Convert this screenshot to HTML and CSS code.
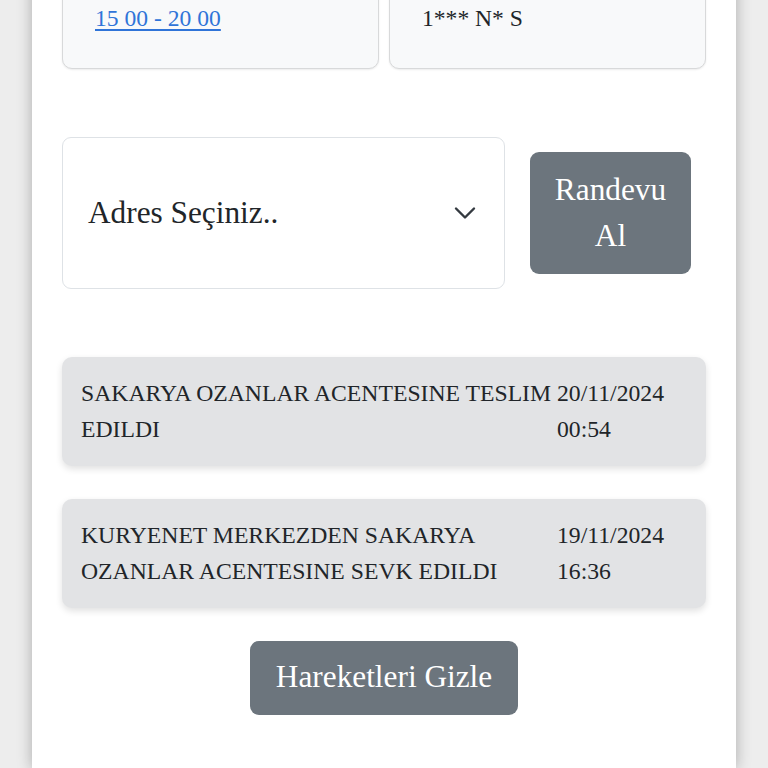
FILE: index.html
```html
<!DOCTYPE html>
<html lang="tr">
<head>
<meta charset="utf-8">
<title>Kargo Takip</title>
<link rel="stylesheet" href="styles.css">
</head>
<body>
<div class="page">
  <div class="info-row">
    <div class="info-card"><a class="time-link" href="#">15 00 - 20 00</a></div>
    <div class="info-card"><span class="info-text">1*** N* S</span></div>
  </div>

  <div class="appt-row">
    <div class="address-select">
      <span class="select-text">Adres Seçiniz..</span>
      <svg class="chevron" width="22" height="14" viewBox="0 0 22 14" aria-hidden="true">
        <polyline points="2,2.5 11,11.5 20,2.5" fill="none" stroke="#343a40" stroke-width="2.4" stroke-linecap="round" stroke-linejoin="round"/>
      </svg>
    </div>
    <button class="btn btn-appt">Randevu Al</button>
  </div>

  <div class="moves">
    <div class="move">
      <div class="move-desc">SAKARYA OZANLAR ACENTESINE TESLIM EDILDI</div>
      <div class="move-date">20/11/2024 00:54</div>
    </div>
    <div class="move">
      <div class="move-desc">KURYENET MERKEZDEN SAKARYA OZANLAR ACENTESINE SEVK EDILDI</div>
      <div class="move-date">19/11/2024 16:36</div>
    </div>
  </div>

  <div class="hide-wrap">
    <button class="btn btn-hide">Hareketleri Gizle</button>
  </div>
</div>
</body>
</html>
```
FILE: styles.css
```css
html, body {
  margin: 0;
  padding: 0;
}
body {
  background: #ededed;
  font-family: "Liberation Serif", "Times New Roman", serif;
  color: #212529;
  overflow: hidden;
  height: 768px;
}
.page {
  width: 644px;
  margin: 0 auto;
  padding: 0 30px 54px;
  background: #ffffff;
  box-shadow: 0 0 14px rgba(0, 0, 0, 0.28);
}
.info-row {
  display: grid;
  grid-template-columns: 1fr 1fr;
  gap: 10px;
  margin-top: -30px;
}
.info-card {
  background: #f8f9fa;
  border: 1px solid #d8d9da;
  border-radius: 10px;
  box-shadow: 0 1px 2px rgba(0, 0, 0, 0.08);
  padding: 34px 32px 37px;
  font-size: 23.6px;
  line-height: 26px;
}
.time-link {
  color: #2f74d8;
  text-decoration: underline;
  text-underline-offset: 3px;
}
.info-text {
  color: #212529;
}
.appt-row {
  display: flex;
  align-items: center;
  margin-top: 68px;
}
.address-select {
  flex: 0 0 443px;
  box-sizing: border-box;
  height: 152px;
  border: 1px solid #dee2e6;
  border-radius: 9px;
  display: flex;
  align-items: center;
  justify-content: space-between;
  padding: 0 28px 0 25px;
  font-size: 31.3px;
}
.select-text {
  color: #212529;
}
.chevron {
  display: block;
}
.btn {
  font-family: "Liberation Serif", "Times New Roman", serif;
  font-size: 31.3px;
  line-height: 46px;
  color: #ffffff;
  background: #6c757d;
  border: 0;
  border-radius: 9px;
  cursor: pointer;
}
.btn-appt {
  width: 161px;
  margin-left: 25px;
  padding: 15px 18px;
}
.moves {
  margin-top: 68px;
  display: flex;
  flex-direction: column;
  gap: 33px;
}
.move {
  background: #e2e3e5;
  border-radius: 10px;
  box-shadow: 0 3px 7px rgba(0, 0, 0, 0.12);
  padding: 18px 19px 19px;
  display: grid;
  grid-template-columns: 476px 1fr;
  font-size: 23.7px;
  line-height: 36px;
  color: #212529;
}
.hide-wrap {
  display: flex;
  justify-content: center;
  margin-top: 33px;
}
.btn-hide {
  padding: 13px 20px 15px;
  width: 268px;
}
```
